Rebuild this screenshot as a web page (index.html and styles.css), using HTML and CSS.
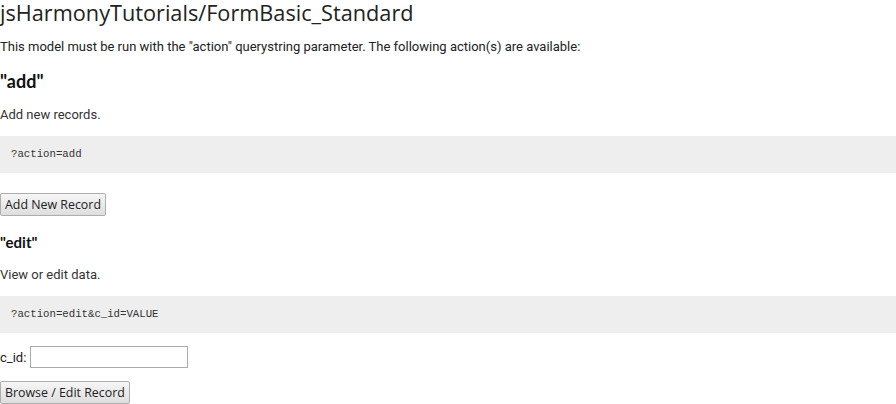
FILE: index.html
```html
<!DOCTYPE html>
<html>
<head>
<meta charset="utf-8">
<link rel="stylesheet" href="styles.css">
</head>
<body>
<h1 class="title">jsHarmonyTutorials/FormBasic_Standard</h1>
<p class="intro">This model must be run with the "action" querystring parameter. The following action(s) are available:</p>
<h2 class="action-h action-add">"add"</h2>
<p class="desc">Add new records.</p>
<pre class="code">?action=add</pre>
<div class="btn-row"><button class="btn">Add New Record</button></div>
<h3 class="action-h action-edit">"edit"</h3>
<p class="desc">View or edit data.</p>
<pre class="code">?action=edit&amp;c_id=VALUE</pre>
<div class="field"><label class="lbl">c_id:</label><input class="inp" type="text"></div>
<div class="btn-row2"><button class="btn">Browse / Edit Record</button></div>
</body>
</html>
```
FILE: styles.css
```css
html, body { margin: 0; padding: 0; background: #fff; }
body { font-family: Roboto, "Liberation Sans", sans-serif; font-size: 13px; color: #222; }
.title { margin: 0; font-family: "Open Sans", sans-serif; font-weight: 400; font-size: 21.7px; line-height: 25px; color: #222; }
.intro { margin: 14px 0 0; line-height: 15px; }
.action-h { margin: 0; font-family: Lato, "Open Sans", sans-serif; font-weight: 700; color: #111; }
.action-add { font-size: 18px; line-height: 20px; margin-top: 17px; }
.action-edit { font-size: 15px; line-height: 18px; margin-top: 17px; }
.desc { margin: 16px 0 0; line-height: 15px; color: #333; }
.code { margin: 14px 0 0; background: #eeeeee; font-family: "Liberation Mono", monospace; font-size: 10.7px; line-height: 13px; padding: 12px 11px; color: #333; }
.btn-row { margin-top: 20px; }
.btn-row2 { margin-top: 13px; }
.btn { font-family: "Open Sans", sans-serif; font-size: 12.4px; height: 23px; padding: 0 4px; border: 1px solid #adadad; border-radius: 2px; background: linear-gradient(#f6f6f6, #dedede); color: #222; margin: 0; line-height: 19px; }
.field { margin-top: 13px; display: flex; align-items: center; gap: 4px; }
.inp { width: 152px; height: 18px; border: 1px solid #aaa; padding: 1px 2px; margin: 0; }
```
